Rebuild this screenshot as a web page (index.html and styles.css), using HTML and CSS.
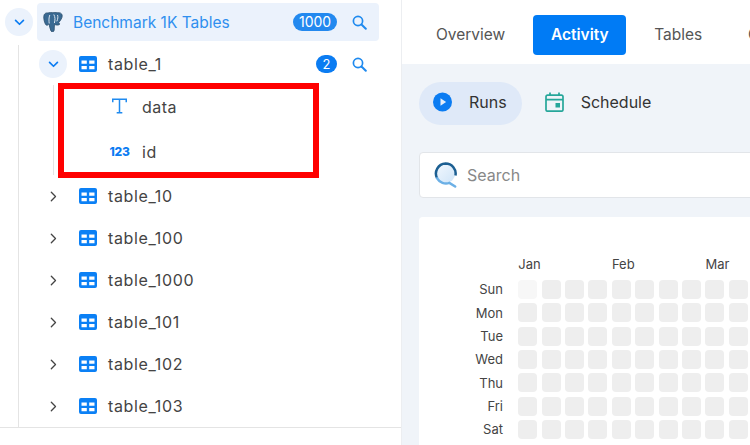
FILE: index.html
```html
<!DOCTYPE html>
<html lang="en">
<head>
    <meta charset="UTF-8">
    <meta name="viewport" content="width=device-width, initial-scale=1.0">
    <title>Benchmark 1K Tables</title>
    <link rel="stylesheet" href="styles.css">
</head>
<body>

<svg class="sprite" width="0" height="0">
    <symbol id="i-chev-down" viewBox="0 0 12 8"><path d="M1.5 1.5 6 6l4.500-4.500" fill="none" stroke="currentColor" stroke-width="1.900" stroke-linecap="round" stroke-linejoin="round"/></symbol>
    <symbol id="i-chev-right" viewBox="0 0 8 12"><path d="M1.500 1.200 6.300 6l-4.800 4.800" fill="none" stroke="currentColor" stroke-width="1.500" stroke-linecap="round" stroke-linejoin="round"/></symbol>
    <symbol id="i-table" viewBox="0 0 18 16"><path fill="#0b80f5" fill-rule="evenodd" d="M2 0h14a2 2 0 0 1 2 2v12a2 2 0 0 1-2 2H2a2 2 0 0 1-2-2V2a2 2 0 0 1 2-2zm.5 4.500v3.200h5.300V4.500zm7.700 0v3.200h5.300V4.500zm-7.700 5.400v3.300h5.300V9.900zm7.700 0v3.300h5.300V9.900z"/></symbol>
    <symbol id="i-search" viewBox="0 0 15 15"><circle cx="6" cy="6" r="4.600" fill="none" stroke="#1f8aef" stroke-width="1.700"/><path d="m9.500 9.500 4.300 4.300" stroke="#1f8aef" stroke-width="2" stroke-linecap="round"/></symbol>
</svg>

<div class="app">
    <aside class="sidebar">
        <div class="tree">
            <div class="db-line">
                <span class="toggle"><svg class="chev-down"><use href="#i-chev-down"/></svg></span>
                <div class="db-row">
                    <svg class="pg-icon" viewBox="0 0 20 20">
                        <path fill="#3a6a93" stroke="#2c4f6d" stroke-width=".8" d="M5 1C2 .5.500 2.500.800 6 1 9 2 12 3.200 13c1 1 1.800-.5 2.800-1 .5 2 1 5 2 7 1 1.500 3 1 3.200-1 .1-2 .1-4 .3-5.500 1.500.5 3.500 1 5 0 .5-1-.5-1.500-1-1.700C17 9 19.500 6 19.200 3.500 19 1 16.500.3 14 .8c-1.500-.5-3-.5-4 0C8.500.5 6.500.5 5 1z"/>
                        <path fill="none" stroke="#dce6ef" stroke-width="1" d="M6.800 3c-1 2.500-1 5.500-.6 8.500M10.800 2.500c1.500 2.500 1.400 5.500.6 8.500M14.500 3c.7 1.800.4 4-.7 6.300"/>
                    </svg>
                    <span class="db-name">Benchmark 1K Tables</span>
                    <span class="badge badge-db">1000</span>
                    <svg class="search-icon"><use href="#i-search"/></svg>
                </div>
            </div>

            <div class="tables">
                <div class="table-row first">
                    <span class="toggle"><svg class="chev-down"><use href="#i-chev-down"/></svg></span>
                    <svg class="table-icon"><use href="#i-table"/></svg>
                    <span class="table-name">table_1</span>
                    <span class="badge">2</span>
                    <svg class="search-icon"><use href="#i-search"/></svg>
                </div>

                <div class="columns">
                    <div class="column-row">
                        <span class="col-type"><svg class="type-t" viewBox="0 0 16 17"><path fill="none" stroke="#1f8aef" stroke-width="1.600" d="M.8 4.500V1.300h14.400v3.200M8 1.300v14.500M5 15.800h6"/></svg></span>
                        <span class="col-name">data</span>
                    </div>
                    <div class="column-row">
                        <span class="col-type"><span class="type-num">123</span></span>
                        <span class="col-name">id</span>
                    </div>
                    <div class="highlight"></div>
                </div>

                <div class="table-row">
                    <span class="toggle plain"><svg class="chev-right"><use href="#i-chev-right"/></svg></span>
                    <svg class="table-icon"><use href="#i-table"/></svg>
                    <span class="table-name">table_10</span>
                </div>
                <div class="table-row">
                    <span class="toggle plain"><svg class="chev-right"><use href="#i-chev-right"/></svg></span>
                    <svg class="table-icon"><use href="#i-table"/></svg>
                    <span class="table-name">table_100</span>
                </div>
                <div class="table-row">
                    <span class="toggle plain"><svg class="chev-right"><use href="#i-chev-right"/></svg></span>
                    <svg class="table-icon"><use href="#i-table"/></svg>
                    <span class="table-name">table_1000</span>
                </div>
                <div class="table-row">
                    <span class="toggle plain"><svg class="chev-right"><use href="#i-chev-right"/></svg></span>
                    <svg class="table-icon"><use href="#i-table"/></svg>
                    <span class="table-name">table_101</span>
                </div>
                <div class="table-row">
                    <span class="toggle plain"><svg class="chev-right"><use href="#i-chev-right"/></svg></span>
                    <svg class="table-icon"><use href="#i-table"/></svg>
                    <span class="table-name">table_102</span>
                </div>
                <div class="table-row">
                    <span class="toggle plain"><svg class="chev-right"><use href="#i-chev-right"/></svg></span>
                    <svg class="table-icon"><use href="#i-table"/></svg>
                    <span class="table-name">table_103</span>
                </div>
            </div>
        </div>
    </aside>

    <main class="main">
        <nav class="tabs">
            <span class="tab">Overview</span>
            <span class="tab active">Activity</span>
            <span class="tab">Tables</span>
            <span class="tab">Columns</span>
        </nav>

        <div class="content">
            <div class="subtabs">
                <div class="subtab selected">
                    <svg class="subtab-icon" viewBox="0 0 19 19"><circle cx="9.500" cy="9.500" r="9.500" fill="#0b7cf2"/><path d="M7.500 5.800v7.400l5.600-3.700z" fill="#e3edfa"/></svg>
                    <span>Runs</span>
                </div>
                <div class="subtab">
                    <svg class="subtab-icon" viewBox="0 0 19 20"><path fill="none" stroke="#26a69a" stroke-width="1.700" d="M2.500 3.200h14a1.500 1.500 0 0 1 1.500 1.500v13a1.500 1.500 0 0 1-1.500 1.500h-14A1.500 1.500 0 0 1 1 17.700v-13a1.500 1.500 0 0 1 1.500-1.500zM1 7.600h17M5 .5v3.500M14 .5v3.500"/><rect x="10.500" y="11" width="4.500" height="4.500" fill="#26a69a"/></svg>
                    <span>Schedule</span>
                </div>
            </div>

            <div class="search-box">
                <svg class="search-logo" viewBox="0 0 26 27">
                    <defs><linearGradient id="lens" x1="0" y1="0" x2="1" y2="1"><stop offset="0" stop-color="#f2f8fe"/><stop offset="1" stop-color="#cfe4f8"/></linearGradient></defs>
                    <circle cx="12" cy="12" r="10" fill="url(#lens)"/>
                    <path d="M3.300 17A10.500 10.500 0 0 1 12 1.500a10.500 10.500 0 0 1 10.300 12.600" fill="none" stroke="#1c5f92" stroke-width="2.600"/>
                    <path d="M3.300 17A10.500 10.500 0 0 0 16 21.700l6 3.800" fill="none" stroke="#6cb0e6" stroke-width="2.600" stroke-linecap="round"/>
                </svg>
                <span class="search-text">Search</span>
            </div>

            <section class="card">
                <div class="months">
                    <span>Jan</span><span>Feb</span><span>Mar</span>
                </div>
                <div class="heatmap">
                    <div class="days">
                        <span>Sun</span><span>Mon</span><span>Tue</span><span>Wed</span><span>Thu</span><span>Fri</span><span>Sat</span>
                    </div>
                    <div class="cells">
                        <i class="empty"></i><i></i><i></i><i></i><i></i><i></i><i></i><i></i><i></i><i></i>
                        <i></i><i></i><i></i><i></i><i></i><i></i><i></i><i></i><i></i><i></i>
                        <i></i><i></i><i></i><i></i><i></i><i></i><i></i><i></i><i></i><i></i>
                        <i></i><i></i><i></i><i></i><i></i><i></i><i></i><i></i><i></i><i></i>
                        <i></i><i></i><i></i><i></i><i></i><i></i><i></i><i></i><i></i><i></i>
                        <i></i><i></i><i></i><i></i><i></i><i></i><i></i><i></i><i></i><i></i>
                        <i></i><i></i><i></i><i></i><i></i><i></i><i></i><i></i><i></i><i></i>
                    </div>
                </div>
            </section>
        </div>
    </main>
</div>

</body>
</html>
```

FILE: styles.css
```css
* {
    box-sizing: border-box;
}

body {
    margin: 0;
    font-family: Inter, "Liberation Sans", sans-serif;
    font-size: 16px;
    color: #444;
    background: #fff;
}

.sprite {
    position: absolute;
}

.app {
    display: flex;
    width: 750px;
    height: 445px;
    overflow: hidden;
}

/* left tree */
.sidebar {
    flex: 0 0 402px;
    border-right: 1px solid #eceef1;
}

.tree {
    height: 428px;
    padding-top: 3px;
    border-bottom: 1px solid #e4e4e4;
}

.db-line {
    display: flex;
    align-items: center;
    padding-left: 5px;
}

.toggle {
    flex: none;
    display: flex;
    align-items: center;
    justify-content: center;
    width: 28px;
    height: 28px;
    border-radius: 50%;
    background: #ebf2fc;
    color: #0b7cf2;
}

.toggle.plain {
    background: none;
    color: #444;
}

.chev-down {
    width: 11px;
    height: 7px;
}

.chev-right {
    width: 7px;
    height: 11px;
}

.db-row {
    display: flex;
    align-items: center;
    width: 342px;
    height: 38px;
    margin-left: 4px;
    padding-left: 6px;
    border-radius: 4px;
    background: #ebf2fc;
}

.pg-icon {
    flex: none;
    width: 20px;
    height: 20px;
}

.db-name {
    flex: 1;
    margin-left: 10px;
    color: #2f8fef;
    font-size: 15.500px;
    white-space: nowrap;
}

.badge {
    flex: none;
    min-width: 21px;
    height: 18px;
    padding: 0 6px;
    border-radius: 9px;
    background: #0b7cf2;
    color: #fff;
    font-size: 13px;
    line-height: 18px;
    text-align: center;
}

.badge-db {
    background: #2389ef;
    width: 44px;
    font-size: 14px;
}

.search-icon {
    flex: none;
    width: 15px;
    height: 15px;
    margin: 0 12px 0 15px;
}

.tables {
    margin: 4px 0 0 18px;
    border-left: 1px solid #e4e4e4;
}

.table-row {
    display: flex;
    align-items: center;
    height: 42px;
    padding: 0 22px 0 20px;
}

.table-row.first {
    height: 38px;
}

.table-icon {
    flex: none;
    width: 18px;
    height: 16px;
    margin: 0 11px 0 12px;
}

.table-name {
    flex: 1;
    letter-spacing: 0.650px;
}

.columns {
    position: relative;
    margin: 2px 0 0 34px;
    border-left: 1px solid #e4e4e4;
}

.column-row {
    display: flex;
    align-items: center;
    height: 45px;
    padding-bottom: 2px;
}

.col-type {
    flex: none;
    display: flex;
    justify-content: center;
    width: 88px;
    padding-left: 43px;
}

.type-t {
    width: 15px;
    height: 16px;
    margin-bottom: 1px;
}

.type-num {
    color: #0b7cf2;
    font-size: 12px;
    font-weight: 800;
    letter-spacing: -0.200px;
}

.col-name {
    letter-spacing: 0.500px;
}

/* red annotation drawn over the column rows */
.highlight {
    position: absolute;
    left: 4px;
    top: -2px;
    width: 261px;
    height: 95px;
    border: 6px solid #ff0000;
}

/* right panel */
.main {
    flex: 1;
    min-width: 0;
    overflow: hidden;
    background: #f0f4f9;
}

.tabs {
    display: flex;
    align-items: flex-start;
    gap: 9.700px;
    height: 64px;
    padding: 15px 0 0 16px;
    background: #fff;
    font-size: 15.500px;
    white-space: nowrap;
}

.tab {
    flex: none;
    height: 40px;
    padding: 0 18px;
    border-radius: 4px;
    line-height: 39px;
    color: #555;
}

.tab.active {
    width: 93.500px;
    background: #007bf5;
    color: #fff;
    font-weight: 600;
    text-align: center;
}

.content {
    width: 620px;
    padding: 18px 0 0 17px;
}

.subtabs {
    display: flex;
    gap: 9px;
}

.subtab {
    display: flex;
    align-items: center;
    gap: 17px;
    height: 43px;
    padding: 0 14px 3px;
    border-radius: 22px;
    color: #333;
}

.subtab.selected {
    padding-right: 15px;
    background: #dfe9f8;
}

.subtab-icon {
    flex: none;
    width: 19px;
    height: 20px;
}

.search-box {
    display: flex;
    align-items: center;
    height: 46px;
    margin-top: 27px;
    padding-left: 14px;
    border: 1px solid #e2e5e9;
    border-radius: 4px;
    background: #fff;
}

.search-logo {
    flex: none;
    width: 25px;
    height: 26px;
}

.search-text {
    margin-left: 8px;
    color: #888;
}

.card {
    margin-top: 19px;
    height: 300px;
    padding-top: 39px;
    border-radius: 4px;
    background: #fff;
    font-size: 13px;
    color: #444;
}

.months {
    display: flex;
    height: 16px;
    margin: 0 0 8px 99.300px;
    line-height: 16px;
}

.months span {
    flex: 0 0 93.600px;
}

.heatmap {
    display: flex;
}

.days {
    flex: 0 0 84px;
    display: grid;
    grid-auto-rows: 19px;
    row-gap: 4.350px;
    padding-top: 0.420px;
    line-height: 19px;
    text-align: right;
}

.cells {
    display: grid;
    grid-template-columns: repeat(10, 19px);
    grid-auto-rows: 19px;
    gap: 4.350px 4.400px;
    margin-left: 15.300px;
}

.cells i {
    border-radius: 4px;
    background: #eee;
}

.cells i.empty {
    background: #f7f7f7;
}
```
